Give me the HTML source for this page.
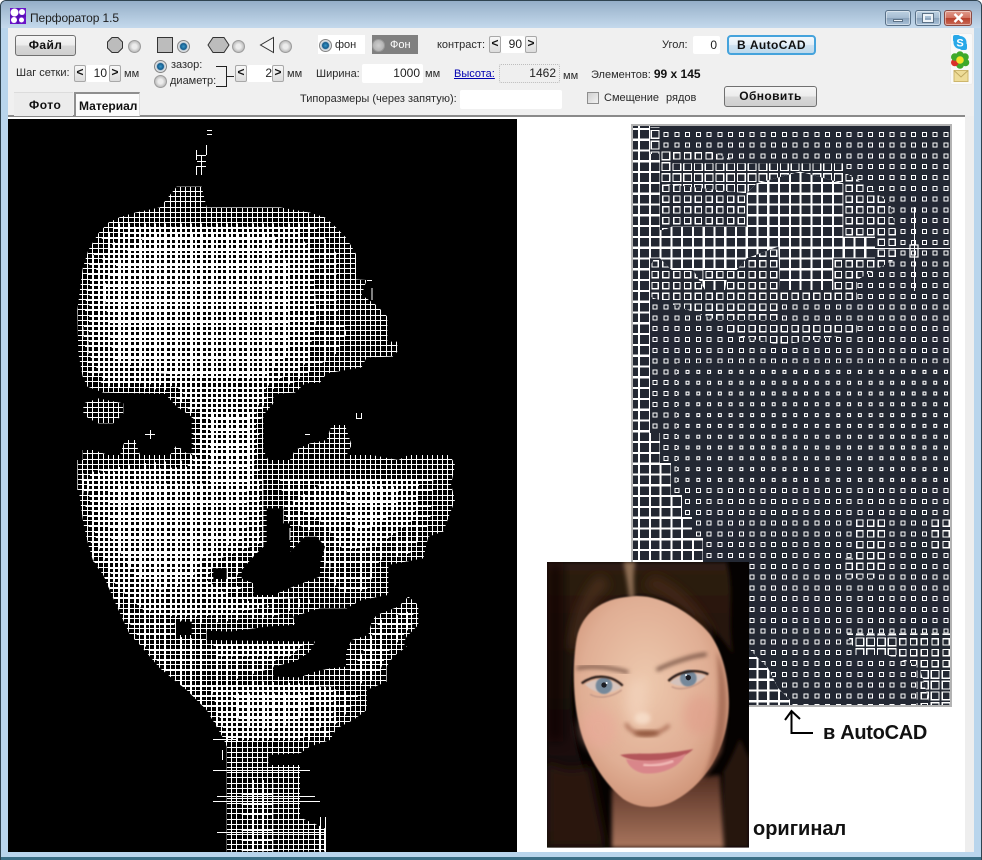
<!DOCTYPE html>
<html><head><meta charset="utf-8"><title>Перфоратор 1.5</title>
<style>
html,body{margin:0;padding:0;width:982px;height:860px;overflow:hidden;background:#fff}
body{position:relative;font:11px/14px "Liberation Sans","Noto Sans CJK SC",sans-serif;color:#2a2a2a}
.a{position:absolute}
#frame{left:0;top:0;width:982px;height:860px;background:#b9d5ec;border-radius:6px 6px 0 0;box-shadow:inset 0 0 0 1px #2f4350}
#title{left:1px;top:1px;width:980px;height:27px;border-radius:5px 5px 0 0;background:linear-gradient(#94aec8,#a4bcd3 30%,#c4d9ec)}
#tool{left:8px;top:28px;width:966px;height:88px;background:#f0f0f0}
#line{left:8px;top:115px;width:957px;height:2px;background:#8a8a8a}
#cont{left:8px;top:117px;width:957px;height:735px;background:#fff}
#side{left:965px;top:116px;width:9px;height:736px;background:#eeeeee}
#bot{left:1px;top:857px;width:980px;height:3px;background:#3b6f86}
.t{position:absolute;white-space:nowrap;line-height:14px}
.btn{position:absolute;box-sizing:border-box;border:1px solid #707070;border-radius:3px;background:linear-gradient(#f6f6f6 0,#ececec 48%,#d8d8d8 52%,#cfcfcf);text-align:center;font-weight:bold;font-size:12px;letter-spacing:.4px;color:#111}
.inp{position:absolute;box-sizing:border-box;background:#fff;text-align:right;padding-right:3px;font-size:12px;line-height:18px;border-radius:2px;color:#222}
.sb{position:absolute;box-sizing:border-box;width:12px;height:17px;background:linear-gradient(#f8f8f8,#dcdcdc);border:1px solid #a8a8a8;border-radius:2px;text-align:center;font:bold 12px/14px "Liberation Mono",monospace;color:#111}
.r{position:absolute;box-sizing:border-box;width:13px;height:13px;border-radius:50%;border:1px solid #9c9c9c;background:radial-gradient(circle,#ececec 0 30%,#bdbdbd 70%,#dcdcdc)}
.r.on{border-color:#848484;background:radial-gradient(circle,#3a98c8 0,#125a8c 40%,#cfd6dc 52%,#eeeeee 85%)}
.wb{position:absolute;box-sizing:border-box;top:10px;height:16px;border:1px solid #587088;border-radius:3px;background:linear-gradient(#bcd0e2,#a6bcd2 48%,#8aa3bc 52%,#a9c1d8);box-shadow:inset 0 0 0 1px rgba(255,255,255,.45)}
</style></head>
<body>
<div class="a" id="frame"></div>
<div class="a" id="title"></div>
<div class="a" id="tool"></div>
<div class="a" id="cont"></div>
<div class="a" id="side"></div>
<div class="a" id="line"></div>
<div class="a" id="bot"></div>

<svg class="a" style="left:0;top:0" width="982" height="860" viewBox="0 0 982 860">
<defs>
<pattern id="pA" patternUnits="userSpaceOnUse" x="5" y="114" width="36" height="36">
<rect width="36" height="36" fill="#000"/>
<path shape-rendering="crispEdges" d="M.5 0V36M5.5 0V36M10.5 0V36M15.5 0V36M21.5 0V36M26.5 0V36M31.5 0V36M0 .5H36M0 5.5H36M0 10.5H36M0 15.5H36M0 21.5H36M0 26.5H36M0 31.5H36" stroke="#fff" stroke-width="1"/>
</pattern>
<pattern id="pB" patternUnits="userSpaceOnUse" x="5" y="114" width="36" height="36">
<rect width="36" height="36" fill="#000"/>
<path shape-rendering="crispEdges" d="M.5 0V36M10.5 0V36M21.5 0V36M26.5 0V36M0 .5H36M0 10.5H36M0 21.5H36M0 26.5H36" stroke="#fff" stroke-width="1"/>
<path shape-rendering="crispEdges" d="M6 0V36M16 0V36M32 0V36M0 6H36M0 16H36M0 32H36" stroke="#fff" stroke-width="2"/>
</pattern>
<pattern id="pC" patternUnits="userSpaceOnUse" x="5" y="114" width="36" height="36">
<rect width="36" height="36" fill="#000"/>
<path shape-rendering="crispEdges" d="M1 0V36M6 0V36M11 0V36M16 0V36M22 0V36M27 0V36M32 0V36M0 1H36M0 6H36M0 11H36M0 16H36M0 22H36M0 27H36M0 32H36" stroke="#fff" stroke-width="2"/>
</pattern>
<pattern id="pD" patternUnits="userSpaceOnUse" x="5" y="114" width="36" height="36">
<rect width="36" height="36" fill="#000"/>
<path shape-rendering="crispEdges" d="M1 0V36M11 0V36M22 0V36M32 0V36M0 1H36M0 11H36M0 22H36M0 32H36" stroke="#fff" stroke-width="2"/>
<path shape-rendering="crispEdges" d="M6.500 0V36M16.500 0V36M27.500 0V36M0 6.500H36M0 16.500H36M0 27.500H36" stroke="#fff" stroke-width="3"/>
</pattern>

<path id="rows" fill="none" d="M628.3 123.500H952M628.3 134.300H952M628.3 145.100H952M628.3 155.900H952M628.3 166.700H952M628.3 177.500H952M628.3 188.300H952M628.3 199.100H952M628.3 209.900H952M628.3 220.700H952M628.3 231.500H952M628.3 242.300H952M628.3 253.100H952M628.3 263.900H952M628.3 274.700H952M628.3 285.500H952M628.3 296.300H952M628.3 307.100H952M628.3 317.900H952M628.3 328.700H952M628.3 339.500H952M628.3 350.300H952M628.3 361.100H952M628.3 371.900H952M628.3 382.700H952M628.3 393.500H952M628.3 404.300H952M628.3 415.100H952M628.3 425.900H952M628.3 436.700H952M628.3 447.500H952M628.3 458.300H952M628.3 469.100H952M628.3 479.900H952M628.3 490.700H952M628.3 501.500H952M628.3 512.300H952M628.3 523.100H952M628.3 533.900H952M628.3 544.700H952M628.3 555.500H952M628.3 566.300H952M628.3 577.100H952M628.3 587.900H952M628.3 598.700H952M628.3 609.500H952M628.3 620.300H952M628.3 631.100H952M628.3 641.900H952M628.3 652.700H952M628.3 663.500H952M628.3 674.300H952M628.3 685.100H952M628.3 695.900H952M628.3 706.700H952"/>

<clipPath id="cA">
<polygon transform="translate(60,120) scale(.33333)" points="350,200 425,200 440,262 660,262 750,278 795,292 828,322 860,355 888,402 888,478 920,480 905,525 950,556 982,590 982,665 1012,665 1012,695 998,710 920,712 905,742 800,760 780,788 735,790 705,818 640,822 640,850 610,885 610,990 625,1020 690,1020 705,990 750,970 800,960 815,915 855,915 875,975 860,1005 935,1005 1015,1020 1045,1005 1170,1005 1185,1035 1170,1110 52,1110 52,1020 68,1020 68,990 100,990 145,1005 180,1005 195,960 225,960 240,1005 330,1005 350,975 380,1000 395,1000 395,890 380,880 350,860 315,822 130,818 82,800 68,770 55,700 52,570 68,445 85,390 115,340 145,308 178,292 225,278 300,262"/>
<polygon transform="translate(60,120) scale(.33333)" points="70,850 115,835 190,850 190,880 175,895 160,910 115,910 85,895 70,880"/>
<polygon transform="translate(60,480) scale(.33333)" points="52,0 1170,0 1185,60 1150,155 1105,170 1090,235 985,255 985,345 905,360 860,385 780,385 700,410 705,435 620,440 510,455 440,452 440,480 765,485 750,515 705,545 640,560 640,590 720,592 765,575 810,565 858,560 858,515 875,480 925,465 935,425 950,405 1015,380 1045,350 1075,375 1075,435 1040,470 1030,490 1040,500 1000,530 980,560 980,605 920,630 920,690 880,720 830,745 810,780 750,800 720,820 625,825 625,855 720,855 720,1012 795,1045 795,1115 500,1115 500,800 490,775 440,690 380,630 300,565 240,495 210,465 180,400 160,355 130,285 100,245 85,195 70,130"/>
</clipPath>
<clipPath id="cB">
<polygon transform="translate(60,120) scale(.33333)" points="178,310 760,310 830,400 830,560 860,640 830,700 770,740 700,790 630,810 610,860 590,1000 610,1110 70,1110 70,1060 240,1030 380,1020 400,1000 400,880 320,810 140,800 85,760 70,640 85,440 120,360"/>
<polygon transform="translate(60,480) scale(.33333)" points="65,0 610,0 610,200 540,270 520,310 580,350 780,360 640,410 440,430 350,420 340,440 350,470 440,480 440,500 640,500 650,560 520,600 720,610 900,640 860,700 820,740 790,780 500,785 450,700 330,590 240,480 190,400 150,340 100,240"/>
<polygon transform="translate(60,480) scale(.33333)" points="660,0 1120,0 1110,130 1050,220 960,240 920,330 850,340 800,290 790,200 770,160 680,120"/>
<polygon transform="translate(60,480) scale(.33333)" points="960,420 1060,390 1060,430 1010,490 980,520 950,600 860,620 860,590 900,530"/>
<polygon transform="translate(60,480) scale(.33333)" points="545,900 640,900 640,1115 545,1115"/>
</clipPath>
<clipPath id="cC">
<polygon transform="translate(60,120) scale(.33333)" points="210,320 700,320 760,400 770,600 740,730 620,800 590,870 580,1110 90,1110 90,1060 380,1040 420,1000 420,880 350,800 130,780 85,700 90,480 150,380"/>
<polygon transform="translate(60,480) scale(.33333)" points="80,0 600,0 600,190 470,240 440,300 510,350 640,380 430,410 340,410 250,390 170,320 110,190"/>
<polygon transform="translate(60,480) scale(.33333)" points="450,620 820,620 820,720 720,780 500,780"/>
<polygon transform="translate(60,480) scale(.33333)" points="800,0 1080,0 1060,120 950,200 850,210 790,130 690,70"/>
<polygon transform="translate(60,480) scale(.33333)" points="460,495 730,495 690,530 470,530"/>
</clipPath>
<clipPath id="cD">
<polygon transform="translate(60,120) scale(.33333)" points="270,340 640,340 690,450 690,700 600,780 300,760 160,720 130,500 190,400"/>
<polygon transform="translate(60,120) scale(.33333)" points="450,880 570,880 570,1110 450,1110"/>
<polygon transform="translate(60,480) scale(.33333)" points="150,10 560,10 560,170 430,230 390,310 300,330 220,280 150,170"/>
<polygon transform="translate(60,480) scale(.33333)" points="520,640 750,640 750,700 650,750 540,740"/>
<polygon transform="translate(60,480) scale(.33333)" points="860,20 1020,20 1000,100 900,160 860,120"/>
</clipPath>

<clipPath id="cRect"><rect x="633" y="126" width="317" height="579"/></clipPath>
<clipPath id="cG">
<polygon points="630,124 650,124 650,154 660,154 660,230 671,230 671,250 650,250 650,433 660,433 660,463 671,463 671,495 682,495 682,517 692,517 692,538 703,538 703,600 757,657 768,668 778,688 790,700 790,710 630,710"/>
<polygon transform="translate(630,120) scale(.33333)" points="125,320 350,320 350,220 380,190 510,155 640,190 640,350 735,350 735,415 610,415 610,510 450,510 445,380 350,415 320,450 220,450 220,480 290,480 285,510 225,510 190,450 125,450 90,415 60,415 60,350"/>
</clipPath>
<clipPath id="c4">
<polygon transform="translate(630,120) scale(.33333)" points="60,22 90,22 90,90 122,90 122,130 640,130 640,190 380,190 350,220 90,190 60,190"/>
<polygon transform="translate(540,555) scale(.33333)" points="945,240 1070,240 1070,300 945,300"/>
<polygon transform="translate(540,555) scale(.33333)" points="1140,340 1232,340 1232,450 1170,450"/>
</clipPath>
<clipPath id="c3">
<polygon transform="translate(630,120) scale(.33333)" points="90,90 230,90 320,125 640,155 700,190 780,250 800,340 800,415 680,480 680,540 450,540 450,600 260,600 60,530 60,440 90,380"/>
<polygon transform="translate(630,320) scale(.33333)" points="285,5 680,5 680,40 450,75 285,40"/>
<polygon transform="translate(540,555) scale(.33333)" points="910,10 1010,10 1010,70 910,70"/>
<polygon transform="translate(540,555) scale(.33333)" points="920,235 1232,235 1232,450 1130,450 1130,330 1040,300 950,300"/>
<polygon transform="translate(630,320) scale(.33333)" points="670,590 770,590 770,750 670,750"/>
<polygon transform="translate(630,320) scale(.33333)" points="900,590 960,590 960,690 900,690"/>
</clipPath>
<clipPath id="c2">
<rect x="633" y="126" width="317" height="237"/>
<rect x="633" y="487" width="317" height="218"/>
<rect x="633" y="363" width="44" height="124"/>
</clipPath>

<clipPath id="cP"><rect x="21" y="21" width="606" height="857"/></clipPath>
<filter id="b2" x="-20%" y="-20%" width="140%" height="140%"><feGaussianBlur stdDeviation="2"/></filter>
<filter id="b5" x="-30%" y="-30%" width="160%" height="160%"><feGaussianBlur stdDeviation="6"/></filter>
<filter id="b14" x="-40%" y="-40%" width="180%" height="180%"><feGaussianBlur stdDeviation="16"/></filter>
<radialGradient id="skin" cx="46%" cy="42%" r="68%"><stop offset="0" stop-color="#edc9ae"/><stop offset=".6" stop-color="#e0ae94"/><stop offset=".88" stop-color="#cf9478"/><stop offset="1" stop-color="#a66e54"/></radialGradient>
<linearGradient id="hairTop" x1="0" y1="0" x2="0" y2="1"><stop offset="0" stop-color="#2e1c12"/><stop offset="1" stop-color="#100806"/></linearGradient>
<linearGradient id="neck" x1="0" y1="0" x2="0" y2="1"><stop offset="0" stop-color="#4e2c20"/><stop offset=".3" stop-color="#6e4434"/><stop offset="1" stop-color="#a9765e"/></linearGradient>
</defs>

<!-- halftone image -->
<rect x="8" y="119" width="509" height="733" fill="#000"/>
<rect x="8" y="119" width="509" height="733" fill="url(#pA)" clip-path="url(#cA)"/>
<g clip-path="url(#cA)">
<rect x="8" y="119" width="509" height="733" fill="url(#pB)" clip-path="url(#cB)"/>
<rect x="8" y="119" width="509" height="733" fill="url(#pC)" clip-path="url(#cC)"/>
<rect x="8" y="119" width="509" height="733" fill="url(#pD)" clip-path="url(#cD)"/>
</g>
<g transform="translate(60,480) scale(.33333)" fill="#000">
<polygon points="620,85 670,85 670,130 690,130 690,215 735,170 770,170 795,200 780,250 780,290 700,320 640,345 580,345 580,310 545,295 545,270 580,230 620,190"/>
<polygon points="348,425 395,425 395,465 348,465"/>
<polygon points="460,265 500,265 500,297 460,297"/>
</g>
<path shape-rendering="crispEdges" stroke="#fff" stroke-width="1" fill="none" d="M207 130.500H212M207 134.500H212M196.500 150V160M196.500 166V175M201.500 155V175M206.500 145V155M196 155.500H206M197 161.500H206M197 166.500H206M145 434.500H155M150.500 430V439M356.500 413V418M361.500 413V418M356 418.500H362M305 434.500H310M213 770.500H310M213 801.500H320M217 796.500H315M217 832.500H325M213 739.500H237M325.500 817V852M320.500 817V852M222.500 750V760M367 280.500H372M372 288V300M330 560V570M290 528V540"/>

<!-- AutoCAD panel -->
<rect x="631" y="124" width="321" height="583" fill="#b4b4b4"/>
<rect x="633" y="126" width="317" height="579" fill="#232833"/>
<g clip-path="url(#cRect)">
<use href="#rows" stroke="#fff" stroke-width="4" stroke-dasharray="4 6.770" stroke-dashoffset="-3.385"/>
<use href="#rows" stroke="#232833" stroke-width="1.800" stroke-dasharray="1.800 8.970" stroke-dashoffset="-4.485"/>
<g clip-path="url(#c2)"><rect x="633" y="126" width="317" height="579" fill="#232833"/>
<use href="#rows" shape-rendering="crispEdges" stroke="#fff" stroke-width="5" stroke-dasharray="5 5.770" stroke-dashoffset="-2.885"/>
<use href="#rows" shape-rendering="crispEdges" stroke="#232833" stroke-width="3" stroke-dasharray="3 7.770" stroke-dashoffset="-3.885"/></g>
<g clip-path="url(#c3)"><rect x="633" y="126" width="317" height="579" fill="#232833"/>
<use href="#rows" shape-rendering="crispEdges" stroke="#fff" stroke-width="7.500" stroke-dasharray="7.500 3.270" stroke-dashoffset="-1.635"/>
<use href="#rows" shape-rendering="crispEdges" stroke="#232833" stroke-width="5" stroke-dasharray="5 5.770" stroke-dashoffset="-2.885"/></g>
<g clip-path="url(#c4)"><rect x="633" y="126" width="317" height="579" fill="#232833"/>
<use href="#rows" shape-rendering="crispEdges" stroke="#fff" stroke-width="9" stroke-dasharray="9 1.770" stroke-dashoffset="-.885"/>
<use href="#rows" shape-rendering="crispEdges" stroke="#232833" stroke-width="6.500" stroke-dasharray="6.500 4.270" stroke-dashoffset="-2.135"/></g>
<g clip-path="url(#cG)"><rect x="633" y="126" width="317" height="579" fill="#fff"/>
<use href="#rows" shape-rendering="crispEdges" stroke="#232833" stroke-width="8.600" stroke-dasharray="8.600 2.170" stroke-dashoffset="-1.085"/></g>
<path d="M914.500 207V291M873 248.500H950" stroke="#fff" stroke-width="1" fill="none" shape-rendering="crispEdges"/>
<rect x="910" y="245" width="8" height="12" fill="none" stroke="#fff" stroke-width="1.200"/>
</g>

<!-- photo -->
<g transform="translate(540,555) scale(.33333)">
<g clip-path="url(#cP)">
<rect x="21" y="21" width="606" height="857" fill="#050201"/>
<path d="M21 21H560C585 120 560 200 580 300C500 170 380 110 270 125C170 130 120 210 100 340C85 450 100 560 130 640L190 878H21Z" fill="url(#hairTop)" filter="url(#b5)"/>
<path d="M21 21H70V560H21Z" fill="#070302" opacity=".7" filter="url(#b14)"/>
<path d="M21 620C70 650 110 650 150 630L200 878H21Z" fill="#2a180e" filter="url(#b14)"/>
<path d="M550 650C575 610 590 570 600 550L627 610V878H545Z" fill="#26150c" filter="url(#b5)"/>
<path d="M250 21C258 60 265 100 268 130L282 130C282 90 278 60 286 21Z" fill="#8e6e54" filter="url(#b5)"/>
<path d="M180 60C140 90 100 180 90 280L110 280C125 190 160 120 210 90Z" fill="#4a2d1b" filter="url(#b14)"/>
<path d="M340 60C420 90 480 160 520 240L500 250C450 180 390 120 310 95Z" fill="#432817" filter="url(#b14)"/>
<path d="M215 700L540 660L552 878H215Z" fill="url(#neck)" filter="url(#b5)"/>
<path d="M270 125C185 130 125 175 110 250C96 330 100 430 115 500C132 590 188 682 250 732C300 764 360 764 412 732C485 690 545 610 562 500C576 420 558 300 508 235C452 170 350 112 270 125Z" fill="url(#skin)" filter="url(#b2)"/>
<ellipse cx="175" cy="520" rx="55" ry="60" fill="#eaa99a" opacity=".55" filter="url(#b14)"/>
<ellipse cx="480" cy="480" rx="50" ry="60" fill="#e09a88" opacity=".5" filter="url(#b14)"/>
<path d="M530 290C565 360 568 470 545 590C530 620 510 650 480 685C525 600 545 480 530 290Z" fill="#8f5540" opacity=".6" filter="url(#b5)"/>
<ellipse cx="290" cy="440" rx="32" ry="70" fill="#f4d6c0" opacity=".6" filter="url(#b14)"/>
<path d="M110 340C170 328 230 342 265 352" stroke="#6e4c3c" stroke-width="9" fill="none" filter="url(#b5)"/>
<path d="M350 345C400 320 460 302 500 298" stroke="#6e4c3c" stroke-width="10" fill="none" filter="url(#b5)"/>
<path d="M135 388C170 365 215 368 245 396C215 420 170 422 135 388Z" fill="#d8c4bc" filter="url(#b2)"/>
<path d="M390 382C420 355 470 350 498 362C470 392 420 402 390 382Z" fill="#d4c2bc" filter="url(#b2)"/>
<circle cx="192" cy="392" r="25" fill="#75889a" filter="url(#b2)"/>
<circle cx="445" cy="370" r="25" fill="#75889a" filter="url(#b2)"/>
<circle cx="192" cy="390" r="8" fill="#1c1c22"/><circle cx="445" cy="368" r="8" fill="#1c1c22"/>
<circle cx="200" cy="384" r="3" fill="#fff"/><circle cx="438" cy="360" r="3" fill="#fff"/>
<path d="M125 385C165 355 215 360 248 392" stroke="#2a1a14" stroke-width="7" fill="none" filter="url(#b2)"/>
<path d="M385 378C415 348 470 340 505 358" stroke="#2a1a14" stroke-width="7" fill="none" filter="url(#b2)"/>
<path d="M150 418C175 432 215 428 245 405" stroke="#c09484" stroke-width="4" fill="none" filter="url(#b2)"/>
<path d="M395 395C425 410 470 395 495 370" stroke="#c09484" stroke-width="4" fill="none" filter="url(#b2)"/>
<path d="M258 505C270 545 350 550 388 510" stroke="#a86a52" stroke-width="10" fill="none" filter="url(#b5)"/>
<ellipse cx="320" cy="535" rx="38" ry="9" fill="#84482f" opacity=".8" filter="url(#b5)"/>
<ellipse cx="308" cy="490" rx="24" ry="18" fill="#f8e0cc" opacity=".8" filter="url(#b5)"/>
<path d="M240 600C300 590 340 605 460 582C420 625 300 635 240 600Z" fill="#b4565a" filter="url(#b2)"/>
<path d="M258 612C320 622 400 615 438 595C420 640 360 660 310 655C285 650 265 635 258 612Z" fill="#d9868a" filter="url(#b2)"/>
<path d="M310 630C340 634 375 628 400 618" stroke="#f0b7b4" stroke-width="8" fill="none" filter="url(#b2)"/>
</g>
</g>
<!-- arrow -->
<path d="M791.500 711V733H813M785 720L791.500 711L800 719" fill="none" stroke="#000" stroke-width="2"/>

<!-- shape icons -->
<polygon points="112,37.500 118,37.500 122.500,42 122.500,48 118,52.500 112,52.500 107.500,48 107.500,42" fill="#bcbcbc" stroke="#333"/>
<rect x="157.500" y="37.500" width="15" height="15" fill="#bcbcbc" stroke="#333"/>
<polygon points="213,37.500 224,37.500 229,45 224,52.500 213,52.500 208,45" fill="#bcbcbc" stroke="#333"/>
<polygon points="273.500,37.500 273.500,52.500 260.500,45" fill="#f4f4f4" stroke="#333"/>
<path d="M216 66.500H226.500V86.500H216M226 76.500H234" fill="none" stroke="#222"/>

<!-- app icon -->
<rect x="10" y="8" width="16" height="16" fill="#6a14c8"/>
<path d="M10 16h16M18 8v16" stroke="#4a0aa8" stroke-width="1"/>
<circle cx="14.500" cy="12.500" r="4" fill="#fff"/><circle cx="22" cy="12" r="3" fill="#fff"/><circle cx="14" cy="20" r="3" fill="#fff"/><circle cx="21.500" cy="20" r="2.500" fill="#fff"/>

<!-- messenger icons -->
<rect x="950.500" y="33.500" width="22" height="51" rx="2" fill="#f9f9f9" stroke="#ececec"/>
<circle cx="960" cy="42.500" r="6.500" fill="#28a8e8"/><rect x="953" y="35" width="7" height="7" rx="2" fill="#28a8e8"/><rect x="960" y="43" width="7" height="7" rx="2" fill="#28a8e8"/>
<text x="960" y="46.500" text-anchor="middle" font-family="Liberation Sans" font-weight="bold" font-size="11" fill="#fff">S</text>
<g fill="#3fa92c"><circle cx="960" cy="55" r="3.800"/><circle cx="965" cy="57" r="3.800"/><circle cx="965.500" cy="62.500" r="3.800"/><circle cx="960" cy="65" r="3.800"/><circle cx="954.800" cy="62.500" r="3.800" fill="#d8302a"/><circle cx="954.800" cy="57" r="3.800"/></g>
<circle cx="960" cy="60" r="3.800" fill="#f4e02a"/>
<rect x="954" y="70.500" width="14" height="11" fill="#eedc98" stroke="#cdb66c"/><path d="M954 70.500L961 77L968 70.500" fill="none" stroke="#bfa860"/>
</svg>

<span class="t" style="left:30px;top:11px;font-size:12px;letter-spacing:-.1px;color:#1e1e1e">Перфоратор 1.5</span>
<div class="wb" style="left:885px;width:26px"><div class="a" style="left:7px;top:8px;width:10px;height:3px;background:#eef3f8;border:1px solid #5c7186;box-sizing:border-box"></div></div>
<div class="wb" style="left:915px;width:26px"><div class="a" style="left:7px;top:3px;width:10px;height:8px;border:2px solid #eef3f8;box-sizing:border-box;outline:1px solid #5c7186"></div></div>
<div class="wb" style="left:944px;width:28px;border-color:#8a4a42;background:linear-gradient(#e09a8c,#d27462 48%,#b8402c 52%,#c96a55)"><svg class="a" style="left:8px;top:2px" width="11" height="10"><path d="M1.500 1L9.500 9M9.500 1L1.500 9" stroke="#fff" stroke-width="2.400"/></svg></div>

<div class="btn" style="left:15px;top:35px;width:61px;height:21px;line-height:19px">Файл</div>
<div class="r" style="left:128px;top:40px"></div>
<div class="r on" style="left:177px;top:40px"></div>
<div class="r" style="left:232px;top:40px"></div>
<div class="r" style="left:279px;top:40px"></div>

<div class="a" style="left:318px;top:35px;width:47px;height:19px;background:#fff"></div>
<div class="r on" style="left:319px;top:39px"></div>
<span class="t" style="left:335px;top:38px">фон</span>
<div class="a" style="left:372px;top:35px;width:46px;height:19px;background:#808080"></div>
<div class="r" style="left:372px;top:39px;border-color:#9a9a9a;background:radial-gradient(circle,#cfcfcf,#a8a8a8)"></div>
<span class="t" style="left:390px;top:38px;color:#fff">Фон</span>
<span class="t" style="left:437px;top:38px">контраст:</span>
<div class="sb" style="left:489px;top:36px">&lt;</div>
<div class="inp" style="left:501px;top:36px;width:24px;height:17px;line-height:17px;padding-right:3px">90</div>
<div class="sb" style="left:525px;top:36px">&gt;</div>
<span class="t" style="left:662px;top:38px">Угол:</span>
<div class="inp" style="left:693px;top:36px;width:27px;height:18px;line-height:18px">0</div>
<div class="btn" style="left:727px;top:35px;width:89px;height:20px;line-height:17px;border:2px solid #45a3dc;background:linear-gradient(#f2f8fc,#e4eff7 48%,#cfe2f0 52%,#bcd9ec);border-radius:4px">В AutoCAD</div>

<span class="t" style="left:16px;top:66px">Шаг сетки:</span>
<div class="sb" style="left:74px;top:65px">&lt;</div>
<div class="inp" style="left:86px;top:65px;width:24px;height:17px;line-height:17px;padding-right:3px">10</div>
<div class="sb" style="left:109px;top:65px">&gt;</div>
<span class="t" style="left:124px;top:67px">мм</span>
<div class="r on" style="left:154px;top:60px"></div>
<span class="t" style="left:171px;top:58px">зазор:</span>
<div class="r" style="left:154px;top:75px"></div>
<span class="t" style="left:170px;top:74px">диаметр:</span>
<div class="sb" style="left:235px;top:65px">&lt;</div>
<div class="inp" style="left:247px;top:65px;width:26px;height:17px;line-height:17px;padding-right:1px">2</div>
<div class="sb" style="left:272px;top:65px">&gt;</div>
<span class="t" style="left:287px;top:67px">мм</span>
<span class="t" style="left:316px;top:67px">Ширина:</span>
<div class="inp" style="left:362px;top:64px;width:61px;height:19px">1000</div>
<span class="t" style="left:425px;top:67px">мм</span>
<span class="t" style="left:454px;top:67px;color:#0000b0;text-decoration:underline">Высота:</span>
<div class="inp" style="left:499px;top:64px;width:61px;height:19px;background:#efefef;border:1px dotted #bdbdbd;line-height:16px">1462</div>
<span class="t" style="left:563px;top:69px">мм</span>
<span class="t" style="left:591px;top:67px">Элементов: <b style="font-size:12px;color:#111">99 x 145</b></span>

<div class="a" style="left:14px;top:92px;width:59px;height:23px;background:#ececec;border-top:1px solid #dcdcdc"></div>
<span class="t" style="left:29px;top:98px;font-weight:bold;font-size:12px;letter-spacing:.5px;color:#111">Фото</span>
<div class="a" style="left:74px;top:92px;width:66px;height:24px;background:#fbfbfb;border-top:2px solid #8f8f8f;border-left:2px solid #8f8f8f;border-right:1px solid #ddd;box-sizing:border-box"></div>
<span class="t" style="left:79px;top:99px;font-weight:bold;font-size:12px;color:#111">Материал</span>
<span class="t" style="left:300px;top:92px">Типоразмеры (через запятую):</span>
<div class="inp" style="left:460px;top:90px;width:102px;height:19px"></div>
<div class="a" style="left:587px;top:92px;width:12px;height:12px;box-sizing:border-box;border:1px solid #8e8e8e;background:linear-gradient(135deg,#cfcfcf,#f2f2f2)"></div>
<span class="t" style="left:604px;top:91px">Смещение</span>
<span class="t" style="left:666px;top:91px">рядов</span>
<div class="btn" style="left:724px;top:86px;width:93px;height:21px;line-height:19px">Обновить</div>

<span class="t" style="left:823px;top:721px;font:bold 20px/24px 'Liberation Sans',sans-serif;letter-spacing:-.3px;color:#111">в AutoCAD</span>
<span class="t" style="left:753px;top:817px;font:bold 20px/24px 'Liberation Sans','Noto Sans CJK SC',sans-serif;color:#111">оригинал</span>
</body></html>
